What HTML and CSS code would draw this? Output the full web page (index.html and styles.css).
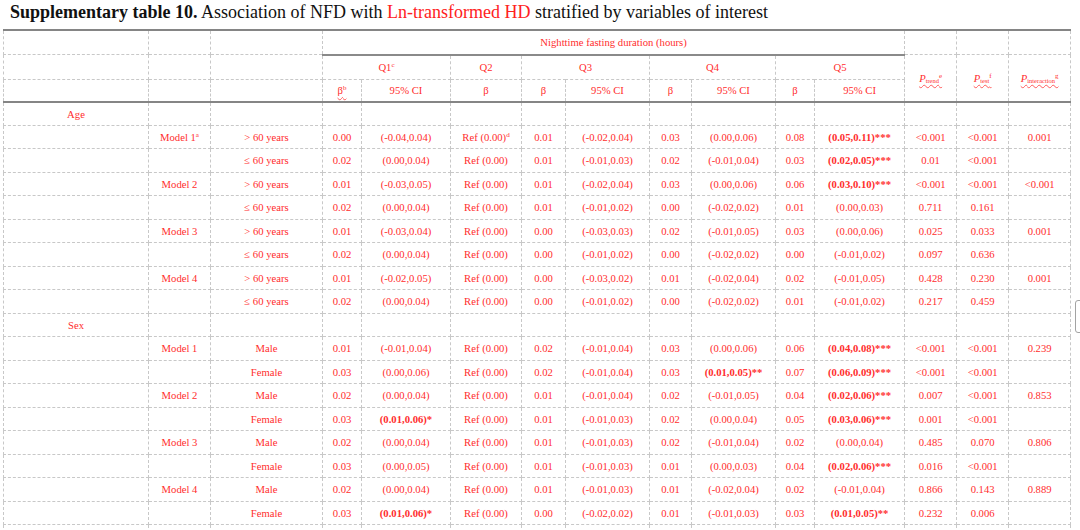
FILE: index.html
```html
<!DOCTYPE html>
<html lang="en">
<head>
<meta charset="utf-8">
<title>Supplementary table 10</title>
<link rel="stylesheet" href="styles.css">
</head>
<body>
<div class="page">
  <h1 class="title"><b>Supplementary table 10.</b> Association of NFD with <span class="hl">Ln-transformed HD</span> stratified by variables of interest</h1>
  <table class="tbl">
    <colgroup>
      <col class="w145"><col class="w62"><col class="w112">
      <col class="w39"><col class="w89"><col class="w71">
      <col class="w44"><col class="w84"><col class="w42"><col class="w84">
      <col class="w39"><col class="w90"><col class="w52"><col class="w52"><col class="w62">
    </colgroup>
    <thead>
      <tr class="hr1">
        <td></td><td></td><td></td>
        <td colspan="9" class="span-head">Nighttime fasting duration (hours)</td>
        <td></td><td></td><td></td>
      </tr>
      <tr class="hr2">
        <td></td><td></td><td></td>
        <td colspan="2">Q1<sup>c</sup></td>
        <td>Q2</td>
        <td colspan="2">Q3</td>
        <td colspan="2">Q4</td>
        <td colspan="2">Q5</td>
        <td rowspan="2"><span class="sp"><i>P</i><sub>trend</sub><sup>e</sup></span></td>
        <td rowspan="2"><span class="sp"><i>P</i><sub>test</sub><sup>f</sup></span></td>
        <td rowspan="2"><span class="sp"><i>P</i><sub>interaction</sub><sup>g</sup></span></td>
      </tr>
      <tr class="hr3">
        <td></td><td></td><td></td>
        <td><span class="sp">β<sup>b</sup></span></td><td>95% CI</td>
        <td>β</td>
        <td>β</td><td>95% CI</td>
        <td>β</td><td>95% CI</td>
        <td>β</td><td>95% CI</td>
      </tr>
    </thead>
    <tbody>
      <tr class="first"><td>Age</td><td></td><td></td><td></td><td></td><td></td><td></td><td></td><td></td><td></td><td></td><td></td><td></td><td></td><td></td></tr>
      <tr><td></td><td>Model 1<sup>a</sup></td><td>&gt; 60 years</td><td>0.00</td><td>(-0.04,0.04)</td><td>Ref (0.00)<sup>d</sup></td><td>0.01</td><td>(-0.02,0.04)</td><td>0.03</td><td>(0.00,0.06)</td><td>0.08</td><td class="b">(0.05,0.11)***</td><td>&lt;0.001</td><td>&lt;0.001</td><td>0.001</td></tr>
      <tr><td></td><td></td><td>≤ 60 years</td><td>0.02</td><td>(0.00,0.04)</td><td>Ref (0.00)</td><td>0.01</td><td>(-0.01,0.03)</td><td>0.02</td><td>(-0.01,0.04)</td><td>0.03</td><td class="b">(0.02,0.05)***</td><td>0.01</td><td>&lt;0.001</td><td></td></tr>
      <tr><td></td><td>Model 2</td><td>&gt; 60 years</td><td>0.01</td><td>(-0.03,0.05)</td><td>Ref (0.00)</td><td>0.01</td><td>(-0.02,0.04)</td><td>0.03</td><td>(0.00,0.06)</td><td>0.06</td><td class="b">(0.03,0.10)***</td><td>&lt;0.001</td><td>&lt;0.001</td><td>&lt;0.001</td></tr>
      <tr><td></td><td></td><td>≤ 60 years</td><td>0.02</td><td>(0.00,0.04)</td><td>Ref (0.00)</td><td>0.01</td><td>(-0.01,0.02)</td><td>0.00</td><td>(-0.02,0.02)</td><td>0.01</td><td>(0.00,0.03)</td><td>0.711</td><td>0.161</td><td></td></tr>
      <tr><td></td><td>Model 3</td><td>&gt; 60 years</td><td>0.01</td><td>(-0.03,0.04)</td><td>Ref (0.00)</td><td>0.00</td><td>(-0.03,0.03)</td><td>0.02</td><td>(-0.01,0.05)</td><td>0.03</td><td>(0.00,0.06)</td><td>0.025</td><td>0.033</td><td>0.001</td></tr>
      <tr><td></td><td></td><td>≤ 60 years</td><td>0.02</td><td>(0.00,0.04)</td><td>Ref (0.00)</td><td>0.00</td><td>(-0.01,0.02)</td><td>0.00</td><td>(-0.02,0.02)</td><td>0.00</td><td>(-0.01,0.02)</td><td>0.097</td><td>0.636</td><td></td></tr>
      <tr><td></td><td>Model 4</td><td>&gt; 60 years</td><td>0.01</td><td>(-0.02,0.05)</td><td>Ref (0.00)</td><td>0.00</td><td>(-0.03,0.02)</td><td>0.01</td><td>(-0.02,0.04)</td><td>0.02</td><td>(-0.01,0.05)</td><td>0.428</td><td>0.230</td><td>0.001</td></tr>
      <tr><td></td><td></td><td>≤ 60 years</td><td>0.02</td><td>(0.00,0.04)</td><td>Ref (0.00)</td><td>0.00</td><td>(-0.01,0.02)</td><td>0.00</td><td>(-0.02,0.02)</td><td>0.01</td><td>(-0.01,0.02)</td><td>0.217</td><td>0.459</td><td></td></tr>
      <tr><td>Sex</td><td></td><td></td><td></td><td></td><td></td><td></td><td></td><td></td><td></td><td></td><td></td><td></td><td></td><td></td></tr>
      <tr><td></td><td>Model 1</td><td>Male</td><td>0.01</td><td>(-0.01,0.04)</td><td>Ref (0.00)</td><td>0.02</td><td>(-0.01,0.04)</td><td>0.03</td><td>(0.00,0.06)</td><td>0.06</td><td class="b">(0.04,0.08)***</td><td>&lt;0.001</td><td>&lt;0.001</td><td>0.239</td></tr>
      <tr><td></td><td></td><td>Female</td><td>0.03</td><td>(0.00,0.06)</td><td>Ref (0.00)</td><td>0.02</td><td>(-0.01,0.04)</td><td>0.03</td><td class="b">(0.01,0.05)**</td><td>0.07</td><td class="b">(0.06,0.09)***</td><td>&lt;0.001</td><td>&lt;0.001</td><td></td></tr>
      <tr><td></td><td>Model 2</td><td>Male</td><td>0.02</td><td>(0.00,0.04)</td><td>Ref (0.00)</td><td>0.01</td><td>(-0.01,0.04)</td><td>0.02</td><td>(-0.01,0.05)</td><td>0.04</td><td class="b">(0.02,0.06)***</td><td>0.007</td><td>&lt;0.001</td><td>0.853</td></tr>
      <tr><td></td><td></td><td>Female</td><td>0.03</td><td class="b">(0.01,0.06)*</td><td>Ref (0.00)</td><td>0.01</td><td>(-0.01,0.03)</td><td>0.02</td><td>(0.00,0.04)</td><td>0.05</td><td class="b">(0.03,0.06)***</td><td>0.001</td><td>&lt;0.001</td><td></td></tr>
      <tr><td></td><td>Model 3</td><td>Male</td><td>0.02</td><td>(0.00,0.04)</td><td>Ref (0.00)</td><td>0.01</td><td>(-0.01,0.03)</td><td>0.02</td><td>(-0.01,0.04)</td><td>0.02</td><td>(0.00,0.04)</td><td>0.485</td><td>0.070</td><td>0.806</td></tr>
      <tr><td></td><td></td><td>Female</td><td>0.03</td><td>(0.00,0.05)</td><td>Ref (0.00)</td><td>0.01</td><td>(-0.01,0.03)</td><td>0.01</td><td>(0.00,0.03)</td><td>0.04</td><td class="b">(0.02,0.06)***</td><td>0.016</td><td>&lt;0.001</td><td></td></tr>
      <tr><td></td><td>Model 4</td><td>Male</td><td>0.02</td><td>(0.00,0.04)</td><td>Ref (0.00)</td><td>0.01</td><td>(-0.01,0.03)</td><td>0.01</td><td>(-0.02,0.04)</td><td>0.02</td><td>(-0.01,0.04)</td><td>0.866</td><td>0.143</td><td>0.889</td></tr>
      <tr><td></td><td></td><td>Female</td><td>0.03</td><td class="b">(0.01,0.06)*</td><td>Ref (0.00)</td><td>0.00</td><td>(-0.02,0.02)</td><td>0.01</td><td>(-0.01,0.03)</td><td>0.03</td><td class="b">(0.01,0.05)**</td><td>0.232</td><td>0.006</td><td></td></tr>
      <tr><td></td><td></td><td></td><td></td><td></td><td></td><td></td><td></td><td></td><td></td><td></td><td></td><td></td><td></td><td></td></tr>
    </tbody>
  </table>
</div>
<div class="side-tab"></div>
</body>
</html>
```
FILE: styles.css
```css
html, body {
  margin: 0;
  padding: 0;
  overflow: hidden;
  background: #ffffff;
}
body {
  width: 1080px;
  height: 530px;
  position: relative;
  font-family: "Liberation Serif", "Times New Roman", serif;
}
.page {
  padding: 2px 0 0 3px;
}
.title {
  margin: 0 0 7px 7px;
  font-size: 18px;
  line-height: 20px;
  height: 20px;
  font-weight: normal;
  color: #111111;
  white-space: nowrap;
}
.title b { font-weight: bold; }
.title .hl { color: #ff2121; }

.tbl {
  border-collapse: collapse;
  table-layout: fixed;
  width: 1067px;
  color: #ff2d2d;
  font-size: 10.67px;
}
.w145 { width: 145px; }
.w112 { width: 112px; }
.w90 { width: 90px; }
.w89 { width: 89px; }
.w84 { width: 84px; }
.w71 { width: 71px; }
.w62 { width: 62px; }
.w52 { width: 52px; }
.w44 { width: 44px; }
.w42 { width: 42px; }
.w39 { width: 39px; }

.tbl td {
  border: 1px dashed #c8c8c8;
  text-align: center;
  vertical-align: middle;
  padding: 0;
  white-space: nowrap;
  line-height: 12px;
  height: 22.5px;
}
.tbl .hr1 td { height: 22.5px; border-top: 2px solid #858585; }
.tbl .hr2 td { height: 23px; }
.tbl .hr3 td { height: 21px; }
.tbl .span-head { border-bottom: 2px solid #8a8a8a; }
.tbl tbody .first td { border-top: 2px solid #858585; height: 22px; }
.tbl .b { font-weight: bold; }

.tbl sup {
  font-size: 7px;
  line-height: 0;
  vertical-align: 4px;
}
.tbl sub {
  font-size: 6.5px;
  line-height: 0;
  vertical-align: -1px;
}
.sp {
  text-decoration: underline wavy #ff5a5a;
  text-decoration-thickness: 1px;
  text-underline-offset: 2px;
}

.side-tab {
  position: absolute;
  left: 1075px;
  top: 300px;
  width: 12px;
  height: 31px;
  border: 1px solid #a3a3a3;
  border-radius: 3px;
  background: #ffffff;
}
```
